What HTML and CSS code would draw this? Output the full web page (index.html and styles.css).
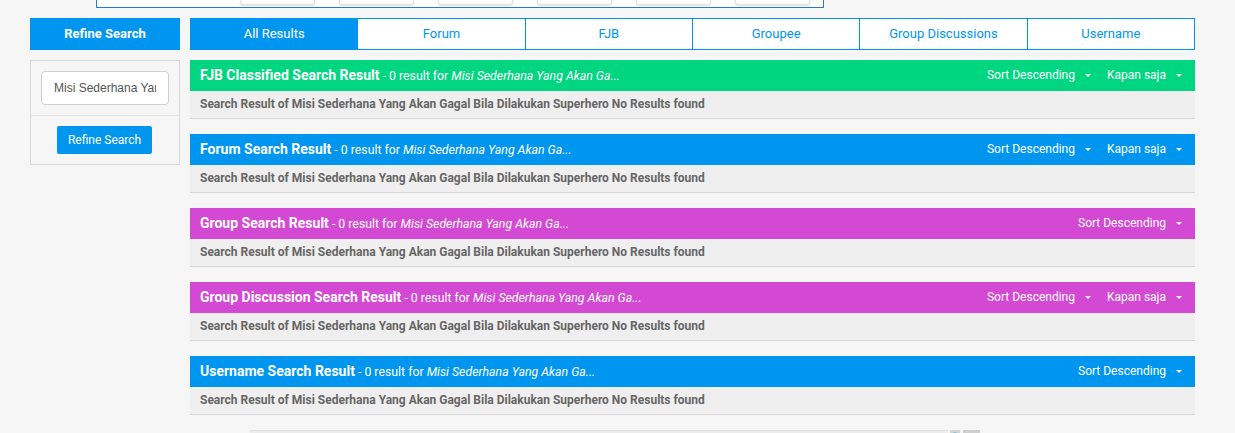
FILE: index.html
```html
<!DOCTYPE html>
<html lang="id">
<head>
<meta charset="utf-8">
<title>Search Result</title>
<link rel="stylesheet" href="styles.css">
</head>
<body>
<div class="banner">
  <div class="banner-card"></div>
  <div class="banner-card"></div>
  <div class="banner-card"></div>
  <div class="banner-card"></div>
  <div class="banner-card"></div>
  <div class="banner-card"></div>
</div>

<div class="page">
  <aside class="sidebar">
    <div class="side-head">Refine Search</div>
    <div class="side-panel">
      <div class="side-input-wrap">
        <input class="side-input" type="text" value="Misi Sederhana Yang Akan Gagal Bila Dilakukan Superhero">
      </div>
      <div class="side-btn-wrap">
        <button class="side-btn">Refine Search</button>
      </div>
    </div>
  </aside>

  <main class="main">
    <nav class="tabs">
      <a class="tab active">All Results</a>
      <a class="tab">Forum</a>
      <a class="tab">FJB</a>
      <a class="tab">Groupee</a>
      <a class="tab">Group Discussions</a>
      <a class="tab">Username</a>
    </nav>

    <section class="result">
      <div class="result-head green">
        <div class="result-title"><b>FJB Classified Search Result</b> - 0 result for <i>Misi Sederhana Yang Akan Ga...</i></div>
        <div class="result-tools">
          <span class="drop">Sort Descending <span class="caret"></span></span>
          <span class="drop">Kapan saja <span class="caret"></span></span>
        </div>
      </div>
      <div class="result-body">Search Result of Misi Sederhana Yang Akan Gagal Bila Dilakukan Superhero No Results found</div>
    </section>

    <section class="result">
      <div class="result-head blue">
        <div class="result-title"><b>Forum Search Result</b> - 0 result for <i>Misi Sederhana Yang Akan Ga...</i></div>
        <div class="result-tools">
          <span class="drop">Sort Descending <span class="caret"></span></span>
          <span class="drop">Kapan saja <span class="caret"></span></span>
        </div>
      </div>
      <div class="result-body">Search Result of Misi Sederhana Yang Akan Gagal Bila Dilakukan Superhero No Results found</div>
    </section>

    <section class="result">
      <div class="result-head purple">
        <div class="result-title"><b>Group Search Result</b> - 0 result for <i>Misi Sederhana Yang Akan Ga...</i></div>
        <div class="result-tools">
          <span class="drop">Sort Descending <span class="caret"></span></span>
        </div>
      </div>
      <div class="result-body">Search Result of Misi Sederhana Yang Akan Gagal Bila Dilakukan Superhero No Results found</div>
    </section>

    <section class="result">
      <div class="result-head purple">
        <div class="result-title"><b>Group Discussion Search Result</b> - 0 result for <i>Misi Sederhana Yang Akan Ga...</i></div>
        <div class="result-tools">
          <span class="drop">Sort Descending <span class="caret"></span></span>
          <span class="drop">Kapan saja <span class="caret"></span></span>
        </div>
      </div>
      <div class="result-body">Search Result of Misi Sederhana Yang Akan Gagal Bila Dilakukan Superhero No Results found</div>
    </section>

    <section class="result">
      <div class="result-head blue">
        <div class="result-title"><b>Username Search Result</b> - 0 result for <i>Misi Sederhana Yang Akan Ga...</i></div>
        <div class="result-tools">
          <span class="drop">Sort Descending <span class="caret"></span></span>
        </div>
      </div>
      <div class="result-body">Search Result of Misi Sederhana Yang Akan Gagal Bila Dilakukan Superhero No Results found</div>
    </section>
  </main>
</div>

<div class="footer-strip">
  <div class="strip-bar"></div>
  <div class="strip-icon"></div>
  <div class="strip-box"></div>
</div>
</body>
</html>
```

FILE: styles.css
```css
* { box-sizing: border-box; }

html, body {
  margin: 0;
  padding: 0;
  background: #f6f6f6;
  font-family: Roboto, "Liberation Sans", Arial, sans-serif;
  color: #333;
  overflow: hidden;
}

.banner {
  margin-left: 96px;
  width: 728px;
  height: 8px;
  background: #fff;
  border: 1px solid #2b76d9;
  border-top: none;
  display: flex;
  gap: 24px;
  padding-left: 143px;
}

.banner-card {
  width: 75px;
  height: 5px;
  background: #fff;
  border: 1px solid #e2e2e2;
  border-top: none;
  border-radius: 0 0 3px 3px;
  box-shadow: 0 1px 2px rgba(0,0,0,0.12);
}

.page {
  display: flex;
  gap: 10px;
  padding-left: 30px;
  margin-top: 10px;
}

.sidebar {
  width: 150px;
  display: flex;
  flex-direction: column;
  gap: 10px;
}

.side-head {
  height: 32px;
  background: #0096f0;
  color: #fff;
  font-weight: 700;
  font-size: 13px;
  display: flex;
  align-items: center;
  justify-content: center;
  padding-bottom: 1px;
}

.side-panel {
  border: 1px solid #d9d9d9;
  background: #f6f6f6;
}

.side-input-wrap {
  padding: 10px;
  border-bottom: 1px solid #e6e6e6;
}

.side-input {
  display: block;
  width: 128px;
  height: 34px;
  border: 1px solid #cfcfcf;
  border-radius: 4px;
  background: #fff;
  padding: 0 12px;
  font-family: "Liberation Sans", Arial, sans-serif;
  font-size: 12px;
  color: #555;
  outline: none;
}

.side-btn-wrap {
  padding: 10px 0;
  display: flex;
  justify-content: center;
}

.side-btn {
  width: 95px;
  height: 28px;
  background: #0096f0;
  color: #fff;
  border: none;
  border-radius: 2px;
  font-family: Roboto, "Liberation Sans", Arial, sans-serif;
  font-size: 12px;
  padding: 0;
  margin-right: 1px;
}

.main {
  width: 1005px;
  display: flex;
  flex-direction: column;
}

.tabs {
  display: flex;
  height: 32px;
  border: 1px solid #0096f0;
  background: #fff;
  margin-bottom: 10px;
}

.tab {
  flex: 1;
  display: flex;
  align-items: center;
  justify-content: center;
  font-size: 13px;
  color: #0096f0;
  border-left: 1px solid #0096f0;
  padding-bottom: 1px;
}

.tab:first-child { border-left: none; }

.tab.active {
  background: #0096f0;
  color: #fff;
}

.result {
  margin-bottom: 15px;
}

.result-head {
  height: 31px;
  display: flex;
  align-items: center;
  justify-content: space-between;
  padding: 0 10px 1px;
  color: #fff;
  font-size: 12px;
}

.result-head.green { background: #00d57f; }
.result-head.blue { background: #0096f0; }
.result-head.purple { background: #d449d3; }

.result-title {
  font-size: 12.3px;
}

.result-title b {
  font-size: 14px;
  font-weight: 700;
}

.result-tools {
  display: flex;
  gap: 16px;
  padding-right: 3px;
}

.drop {
  display: flex;
  align-items: center;
  gap: 10px;
}

.caret {
  width: 0;
  height: 0;
  border-left: 3px solid transparent;
  border-right: 3px solid transparent;
  border-top: 3px solid #fff;
  margin-top: 1px;
}

.result-body {
  height: 28px;
  background: #efefef;
  border-bottom: 1px solid #d6d6d6;
  padding: 0 10px 1px;
  display: flex;
  align-items: center;
  font-size: 12px;
  font-weight: 700;
  color: #666;
}

.footer-strip {
  display: flex;
  margin-left: 250px;
  height: 10px;
  gap: 0;
}

.strip-bar {
  width: 698px;
  background: #ececec;
  border-top: 1px solid #e0e0e0;
}

.strip-icon {
  width: 10px;
  margin-left: 2px;
  background: radial-gradient(circle at 50% 70%, #35b9e6 0 4px, transparent 5px), #d4d4d4;
}

.strip-box {
  width: 17px;
  margin-left: 3px;
  background: #cfcfcf;
}
```
